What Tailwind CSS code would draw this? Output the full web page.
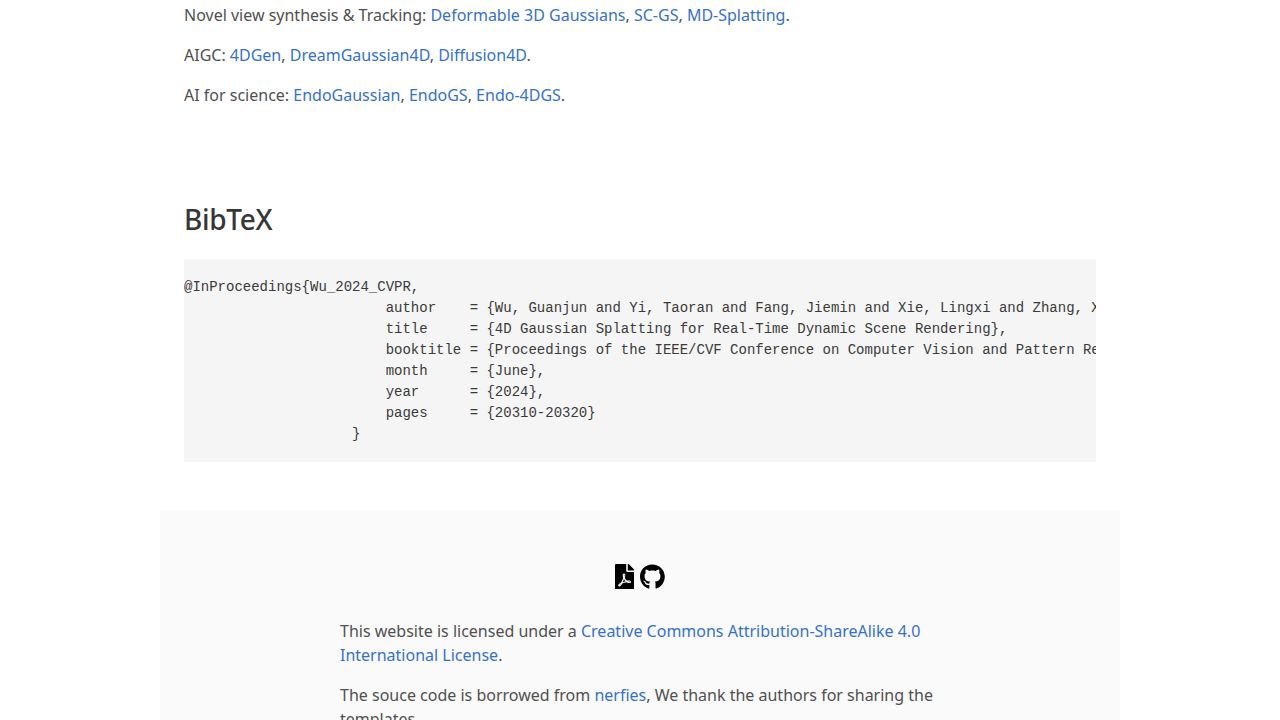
<!DOCTYPE html>
<html lang="en">
<head>
<meta charset="utf-8">
<title>4D Gaussian Splatting</title>
<script src="https://cdn.jsdelivr.net/npm/@tailwindcss/browser@4"></script>
</head>
<body class="bg-white">
<div class="h-[720px] overflow-hidden font-['Noto_Sans',sans-serif] text-base leading-6 text-[#505050]">
  <main class="w-[960px] mx-auto">
    <section class="px-6 pt-[3px]">
      <p class="mb-4">Novel view synthesis &amp; Tracking: <a class="text-[#3671c9]" href="#">Deformable 3D Gaussians</a>, <a class="text-[#3671c9]" href="#">SC-GS</a>, <a class="text-[#3671c9]" href="#">MD-Splatting</a>.</p>
      <p class="mb-4">AIGC: <a class="text-[#3671c9]" href="#">4DGen</a>, <a class="text-[#3671c9]" href="#">DreamGaussian4D</a>, <a class="text-[#3671c9]" href="#">Diffusion4D</a>.</p>
      <p>AI for science: <a class="text-[#3671c9]" href="#">EndoGaussian</a>, <a class="text-[#3671c9]" href="#">EndoGS</a>, <a class="text-[#3671c9]" href="#">Endo-4DGS</a>.</p>
      <h2 class="mt-[97px] mb-[23px] text-[28px] leading-[31.5px] font-medium tracking-[-0.3px] text-[#363636]">BibTeX</h2>
      <pre class="bg-[#f5f5f5] pt-[18.5px] pb-[16.5px] overflow-hidden font-['Liberation_Mono',monospace] text-sm leading-[21px] text-[#3a3a3a]">@InProceedings{Wu_2024_CVPR,
                        author    = {Wu, Guanjun and Yi, Taoran and Fang, Jiemin and Xie, Lingxi and Zhang, Xiaopeng and Wei, Wei and Liu, Wenyu and Tian, Qi and Wang, Xinggang},
                        title     = {4D Gaussian Splatting for Real-Time Dynamic Scene Rendering},
                        booktitle = {Proceedings of the IEEE/CVF Conference on Computer Vision and Pattern Recognition (CVPR)},
                        month     = {June},
                        year      = {2024},
                        pages     = {20310-20320}
                    }</pre>
    </section>
    <footer class="mt-12 bg-[#fafafa] pt-12 pb-12">
      <div class="flex justify-center items-center gap-[6.4px] h-[37.6px]">
        <a href="#" aria-label="PDF" class="text-black">
          <svg class="w-[19.2px] h-[25.6px]" viewBox="0 0 384 512" fill="currentColor"><path d="M181.9 256.1c-5-16-4.9-46.9-2-46.9 8.4 0 7.6 36.9 2 46.9zm-1.7 47.2c-7.7 20.2-17.3 43.3-28.4 62.7 18.3-7 39-17.2 62.9-21.9-12.7-9.6-24.9-23.4-34.5-40.8zM86.1 428.1c0 .8 13.2-5.4 34.9-40.2-6.7 6.3-29.1 24.5-34.9 40.2zM248 160h136v328c0 13.3-10.7 24-24 24H24c-13.3 0-24-10.7-24-24V24C0 10.7 10.7 0 24 0h200v136c0 13.2 10.8 24 24 24zm-8 171.8c-20-12.2-33.3-29-42.7-53.8 4.5-18.5 11.6-46.6 6.2-64.2-4.7-29.4-42.4-26.5-47.8-6.8-5 18.3-.4 44.1 8.1 77-11.6 27.6-28.7 64.6-40.8 85.8-.1 0-.1.1-.2.1-27.1 13.9-73.6 44.5-54.5 68 5.6 6.9 16 10 21.5 10 17.9 0 35.7-18 61.1-61.8 25.8-8.5 54.1-19.1 79-23.2 21.7 11.8 47.1 19.5 64 19.5 29.2 0 31.2-32 19.7-43.4-13.9-13.6-54.3-9.7-73.6-7.2zM377 105L279 7c-4.5-4.5-10.6-7-17-7h-6v128h128v-6.1c0-6.3-2.5-12.4-7-16.9zm-74.1 255.3c4.1-2.7-2.5-11.9-42.8-9 37.1 15.8 42.8 9 42.8 9z"/></svg>
        </a>
        <a href="#" aria-label="GitHub" class="text-black">
          <svg class="w-[24.8px] h-[25.6px]" viewBox="0 0 496 512" fill="currentColor"><path d="M165.9 397.4c0 2-2.3 3.6-5.2 3.6-3.3 0-5.6-1.6-5.6-3.6 0-2 2.3-3.6 5.2-3.6 3-.3 5.6 1.3 5.6 3.6zm-31.1-4.5c-.7 2 1.3 4.3 4.3 4.9 2.6 1 5.6 0 6.2-2s-1.3-4.3-4.3-5.2c-2.6-.7-5.5.3-6.2 2.3zm44.2-1.7c-2.9.7-4.9 2.6-4.6 4.9.3 2 2.9 3.3 5.9 2.6 2.9-.7 4.9-2.6 4.6-4.6-.3-1.9-3-3.2-5.9-2.9zM244.8 8C106.1 8 0 113.3 0 252c0 110.9 69.8 205.8 169.5 239.2 12.8 2.3 17.3-5.6 17.3-12.1 0-6.2-.3-40.4-.3-61.4 0 0-70 15-84.7-29.8 0 0-11.4-29.1-27.8-36.6 0 0-22.9-15.7 1.6-15.4 0 0 24.9 2 38.6 25.8 21.9 38.6 58.6 27.5 72.9 20.9 2.3-16 8.8-27.1 16-33.7-55.9-6.2-112.3-14.3-112.3-110.5 0-27.5 7.6-41.3 23.6-58.9-2.6-6.5-11.1-33.3 2.6-67.9 20.9-6.5 69 27 69 27 20-5.6 41.5-8.5 62.8-8.5s42.8 2.9 62.8 8.5c0 0 48.1-33.6 69-27 13.7 34.7 5.2 61.4 2.6 67.9 16 17.7 25.8 31.5 25.8 58.9 0 96.5-58.9 104.2-114.8 110.5 9.2 7.9 17 22.9 17 46.4 0 33.7-.3 75.4-.3 83.6 0 6.5 4.6 14.4 17.3 12.1C428.2 457.8 496 362.9 496 252 496 113.3 383.5 8 244.8 8z"/></svg>
        </a>
      </div>
      <div class="w-[600px] mx-auto mt-[24.4px]">
        <p class="mb-4">This website is licensed under a <a class="text-[#3671c9]" href="#">Creative Commons Attribution-ShareAlike 4.0 International License</a>.</p>
        <p>The souce code is borrowed from <a class="text-[#3671c9]" href="#">nerfies</a>, We thank the authors for sharing the templates.</p>
      </div>
    </footer>
  </main>
</div>
</body>
</html>
